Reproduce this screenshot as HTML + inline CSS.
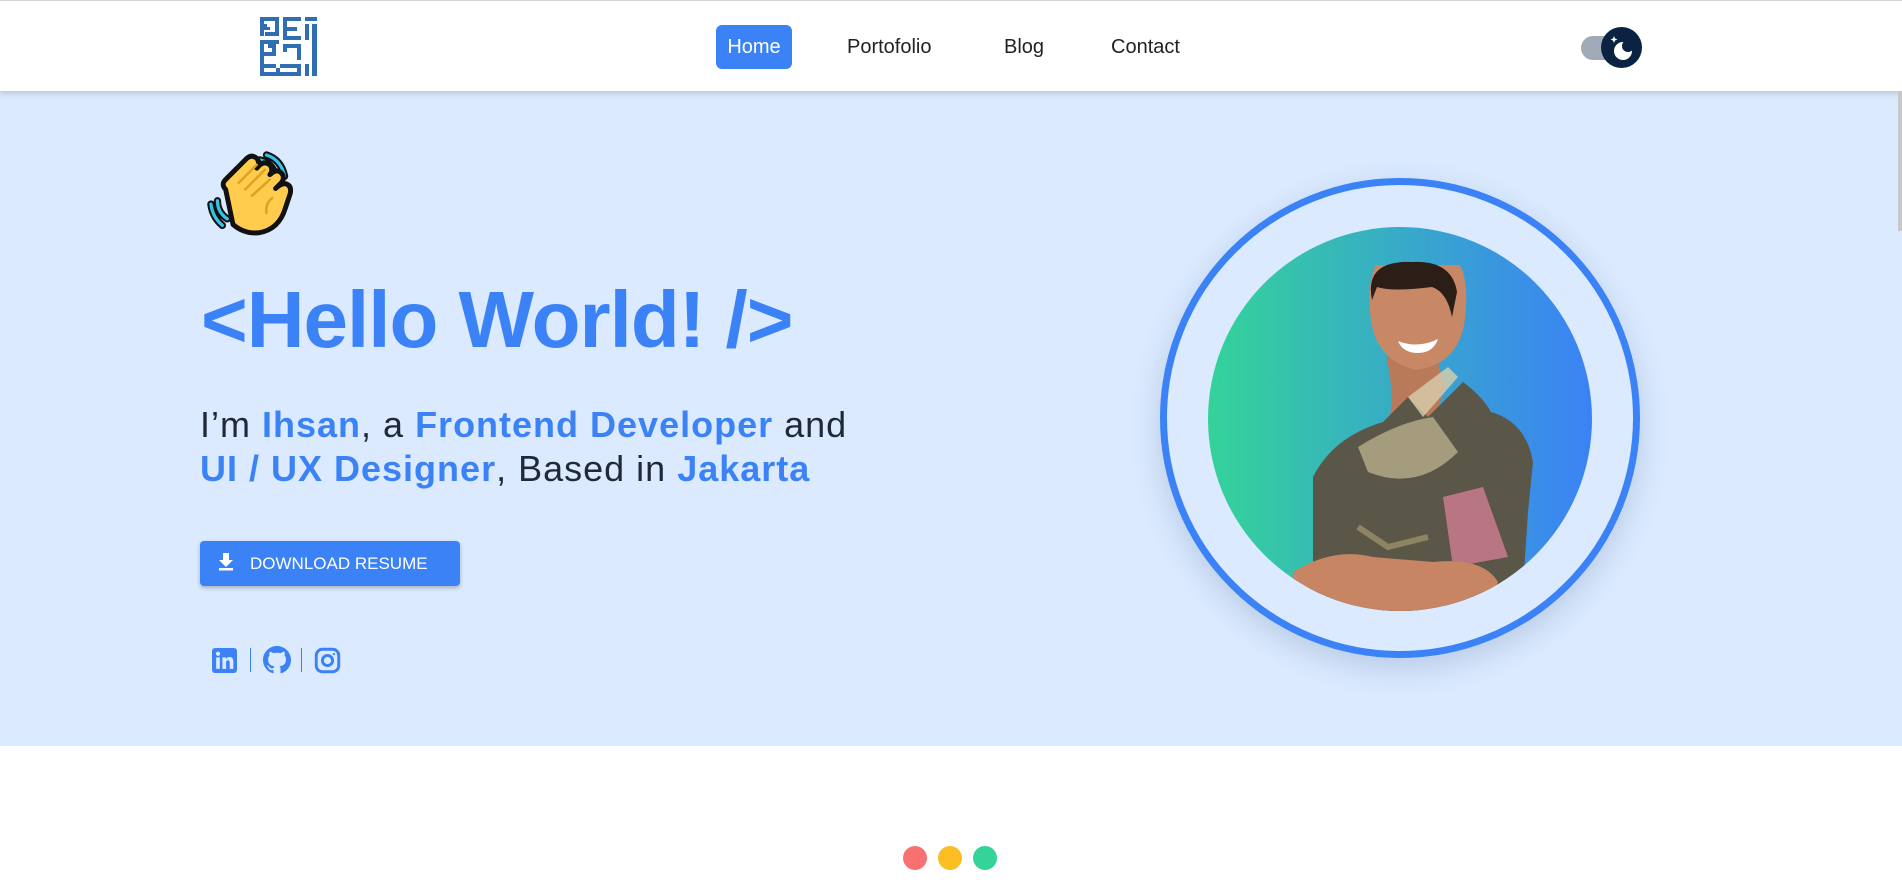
<!DOCTYPE html>
<html><head><meta charset="utf-8"><style>
*{margin:0;padding:0;box-sizing:border-box}
html,body{width:1902px;height:889px;overflow:hidden;background:#fff;font-family:"Liberation Sans",sans-serif}
.nav{position:absolute;left:0;top:0;width:1902px;height:91px;background:#fff;border-top:1px solid #d4d4d4;box-shadow:0 2px 6px rgba(0,0,0,.18);z-index:2}
.nav a{position:absolute;top:24px;height:44px;line-height:44px;font-size:20px;color:#222;text-decoration:none}
.home{left:716px;width:76px;background:#3b82f6;color:#fff!important;border-radius:6px;text-align:center}
.hero{position:absolute;left:0;top:91px;width:1902px;height:655px;background:#dbeafe}
h1{position:absolute;left:201px;top:184px;font-size:80px;letter-spacing:-1px;color:#3b82f6;font-weight:bold;line-height:90px;white-space:nowrap}
.sub{position:absolute;left:200px;font-size:36px;line-height:44px;color:#1f2937;white-space:nowrap;letter-spacing:1px}
.sub b{color:#3b82f6}
.btn{position:absolute;left:200px;width:260px;height:45px;background:#3b82f6;border-radius:4px;box-shadow:0 2px 4px rgba(0,0,0,.25);color:#fff;font-size:17px;line-height:45px;padding-left:50px}
.sep{position:absolute;width:1px;height:24px;background:#3b82f6}
.dot{position:absolute;top:846px;width:24px;height:24px;border-radius:50%}
</style></head><body>
<div class="nav">
<svg style="position:absolute;left:260px;top:16px" width="57" height="60" viewBox="0 0 57 60" fill="#2f6db5">
<path d="M0 0h19v19h-14v-4h10v-11h-11v9h6v-3h-3v-3h-4zM0 0h4v19h-4z"/>
<path d="M23 0h18v4h-14v6h10v4h-10v5h14v4h-18z"/>
<path d="M45 0h12v4h-12zM52 7h5v52h-5zM45 7h4v16h-4z"/>
<path d="M0 23h19v4h-15v8h8v-4h-4v-4h8v12h-16zM0 23h4v24h-4z"/>
<path d="M23 27h18v16h-4v-12h-10v4h-4z"/>
<path d="M0 47h16v4h-12v4h12v-4h4v8h-20z"/>
<path d="M20 47h21v12h-21v-4h17v-4h-17z"/>
<path d="M45 47h4v12h-4z"/>
</svg>
<a class="home" href="#">Home</a>
<a href="#" style="left:847px">Portofolio</a>
<a href="#" style="left:1004px">Blog</a>
<a href="#" style="left:1111px">Contact</a>
<div style="position:absolute;left:1581px;top:35px;width:40px;height:24px;border-radius:12px;background:#a0aab8"></div>
<div style="position:absolute;left:1601px;top:26px;width:41px;height:41px;border-radius:50%;background:#0b2242"></div>
<svg style="position:absolute;left:1601px;top:26px" width="41" height="41" viewBox="0 0 41 41"><circle cx="22" cy="24" r="9" fill="#fff"/><circle cx="27" cy="19" r="6" fill="#0b2242"/><path d="M13 9l1 2.5 2.5 1-2.5 1-1 2.5-1-2.5-2.5-1 2.5-1z" fill="#fff"/></svg>
</div>
<div style="position:absolute;right:0;top:91px;width:4px;height:140px;background:#c8c8c8;z-index:3"></div>
<div class="hero">
<svg style="position:absolute;left:206px;top:55px" width="90" height="90" viewBox="0 0 110 100">
<path d="M66 12q16 4 20 22M74 6q18 6 22 26" stroke="#111" stroke-width="9" fill="none" stroke-linecap="round"/>
<path d="M66 12q16 4 20 22M74 6q18 6 22 26" stroke="#35c4e6" stroke-width="4" fill="none" stroke-linecap="round"/>
<path d="M14 62q0 14 12 22M6 66q2 16 14 26" stroke="#111" stroke-width="9" fill="none" stroke-linecap="round"/>
<path d="M14 62q0 14 12 22M6 66q2 16 14 26" stroke="#35c4e6" stroke-width="4" fill="none" stroke-linecap="round"/>
<path d="M24 48q-6-6 0-12l26-26q6-5 12 0 5 6 0 12l4-4q6-5 12 0 5 6 0 12l4-3q6-4 11 2 4 6-2 12l-6 6q6-6 12-6 8 2 6 12l-6 18q-8 26-32 30-18 2-32-10z" fill="#ffcc4d" stroke="#111" stroke-width="6" stroke-linejoin="round"/>
<path d="M40 40l22-22M48 48l24-24M56 56l22-20" stroke="#e0a020" stroke-width="3" fill="none" stroke-linecap="round"/>
<path d="M82 58q-10 6-8 20" stroke="#e0a020" stroke-width="3" fill="none"/>
</svg>
<h1>&lt;Hello World! /&gt;</h1>
<div class="sub" style="top:312px">I’m <b>Ihsan</b>, a <b>Frontend Developer</b> and<br><b>UI / UX Designer</b>, Based in <b>Jakarta</b></div>
<div class="btn" style="top:450px">DOWNLOAD RESUME</div>
<svg style="position:absolute;left:218px;top:462px" width="16" height="18" viewBox="0 0 16 18" fill="#fff"><path d="M5 0h6v7h4l-7 7-7-7h4z"/><rect x="1" y="15" width="14" height="2.5"/></svg>
<svg style="position:absolute;left:212px;top:557px" width="25" height="25" viewBox="0 0 24 24"><rect width="24" height="24" rx="3" fill="#3b82f6"/><rect x="4" y="9" width="3.5" height="11" fill="#dbeafe"/><circle cx="5.8" cy="5.5" r="2" fill="#dbeafe"/><path d="M10 9h3.3v1.6q1.2-2 3.7-2 3.5 0 3.5 4.5V20h-3.5v-6q0-2.3-1.8-2.3-1.7 0-1.7 2.3v6H10z" fill="#dbeafe"/></svg>
<div class="sep" style="top:557px;left:250px"></div>
<svg style="position:absolute;left:263px;top:555px" width="28" height="28" viewBox="0 0 16 16" fill="#3b82f6"><path d="M8 0C3.58 0 0 3.58 0 8c0 3.540 2.29 6.530 5.470 7.590.4.07.55-.17.55-.38 0-.19-.01-.82-.01-1.490-2.010.37-2.530-.49-2.690-.94-.09-.23-.48-.94-.82-1.130-.28-.15-.68-.52-.01-.53.63-.01 1.080.58 1.230.82.72 1.210 1.870.87 2.330.66.07-.52.28-.87.51-1.070-1.780-.2-3.640-.89-3.640-3.950 0-.87.31-1.590.82-2.150-.08-.2-.36-1.020.08-2.120 0 0 .67-.21 2.200.82.64-.18 1.320-.27 2-.27.68 0 1.360.09 2 .27 1.530-1.040 2.200-.82 2.200-.82.44 1.100.16 1.920.08 2.120.51.56.82 1.270.82 2.150 0 3.070-1.870 3.750-3.650 3.950.29.25.54.73.54 1.480 0 1.070-.01 1.930-.01 2.200 0 .21.15.46.55.38A8.013 8.013 0 0016 8c0-4.420-3.580-8-8-8z"/></svg>
<div class="sep" style="top:557px;left:301px"></div>
<svg style="position:absolute;left:314px;top:556px" width="27" height="27" viewBox="0 0 24 24" fill="none" stroke="#3b82f6" stroke-width="2.6"><rect x="2" y="2" width="20" height="20" rx="5.5"/><circle cx="12" cy="12" r="4.5"/><circle cx="17.8" cy="6.2" r="1" fill="#3b82f6" stroke="none"/></svg>
<div style="position:absolute;left:1160px;top:87px;width:480px;height:480px;border-radius:50%;border:7px solid #3b82f6;box-shadow:0 10px 30px rgba(30,60,120,.18)"></div>
<svg style="position:absolute;left:1208px;top:136px" width="384" height="384" viewBox="0 0 384 384">
<defs><linearGradient id="g" x1="0" x2="1"><stop offset="0" stop-color="#34d399"/><stop offset="1" stop-color="#3b82f6"/></linearGradient><clipPath id="c"><circle cx="192" cy="192" r="192"/></clipPath></defs>
<circle cx="192" cy="192" r="192" fill="url(#g)"/>
<g clip-path="url(#c)">
<path d="M178 130q8 30 4 60l45 0 10-30-10-35z" fill="#b97a5a"/>
<path d="M105 250q20-40 70-55l25-25 20 20 35-35q20 15 28 30 35 10 42 50l-5 50-10 150h-205z" fill="#5a5648"/>
<path d="M150 220q40-25 75-30l25 35q-40 40-90 20z" fill="#bdb48e" opacity=".75"/>
<path d="M200 170l15 20 35-40-10-10z" fill="#d8cfae" opacity=".8"/>
<path d="M235 270l40-10 25 70-55 10z" fill="#c97a8e" opacity=".85"/>
<path d="M150 300l30 20 40-10" stroke="#8d8462" stroke-width="6" fill="none"/>
<path d="M85 345q40-25 80-15l60 5q50-5 65 20-10 30-60 35-70 10-140-10z" fill="#c88563"/>
<g transform="translate(-22,-32)">
<path d="M190 70q-10 20-5 55 5 40 45 50 40-5 48-45 6-40-4-60z" fill="#c88866"/>
<path d="M186 105q-8-40 40-38 40-2 45 30l-5 25q-5-25-20-30-40 5-55 0z" fill="#2a1e17"/>
<path d="M212 146q20 8 40-2-5 14-20 14-15 0-20-12z" fill="#fff"/>
</g>
</g>
</svg>
</div>
<div class="dot" style="left:903px;background:#f87171"></div>
<div class="dot" style="left:938px;background:#fbbf24"></div>
<div class="dot" style="left:973px;background:#34d399"></div>
</body></html>
